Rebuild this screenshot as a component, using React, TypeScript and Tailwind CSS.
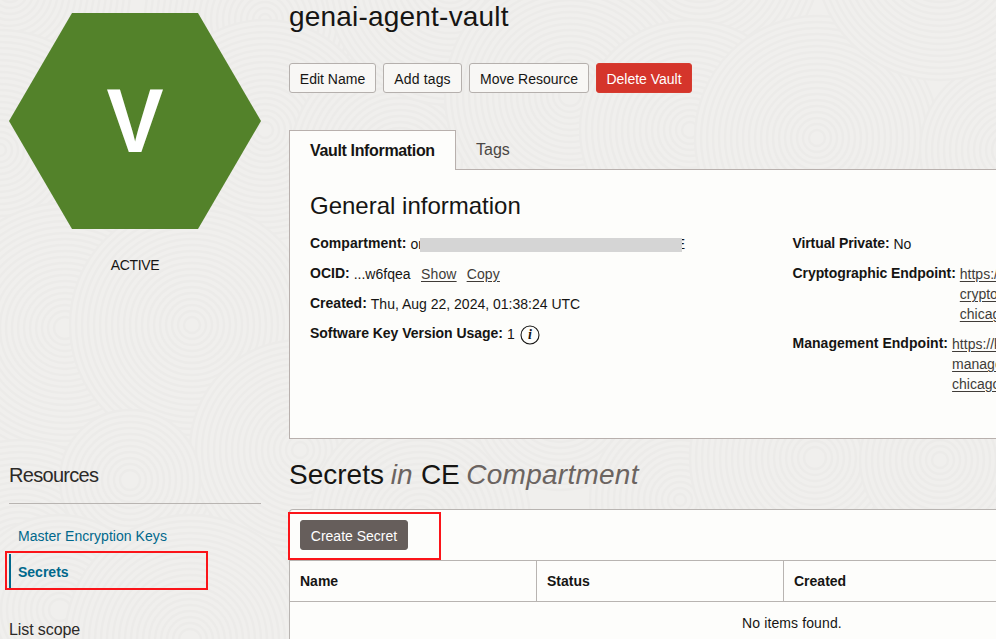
import type { ReactNode } from "react";

const DISCS: [number, number, number][] = [
  [10, -10, 120], [265, 20, 120], [265, 130, 110], [0, 150, 120],
  [130, 470, 110], [65, 328, 125], [192, 325, 122], [300, 450, 110],
  [20, 560, 120], [130, 480, 70], [60, 610, 95], [190, 640, 125],
  [400, 160, 110], [450, -20, 125], [700, -40, 120], [570, 95, 125], [690, 130, 110],
  [817, 138, 122], [1010, 150, 90], [940, -45, 125],
  [420, 520, 110], [560, 400, 90], [680, 500, 90], [815, 458, 125], [940, 460, 80],
];

function Texture() {
  return (
    <svg className="pointer-events-none absolute inset-0 -z-10" width="996" height="639" fill="none" aria-hidden="true">
      {DISCS.map(([x, y, r]) => (
        <g key={`${x}-${y}`}>
          <circle cx={x} cy={y} r={r} fill="#f0efed" />
          {Array.from({ length: Math.floor(r / 6) }, (_, i) => (
            <circle key={i} cx={x} cy={y} r={r - i * 6} stroke="#ecebe9" strokeWidth="2.4" />
          ))}
        </g>
      ))}
    </svg>
  );
}

function Button({ children, className }: { children: ReactNode; className: string }) {
  return (
    <button className={`h-[30px] shrink-0 rounded-[3px] border pt-px text-sm leading-[28px] ${className}`}>{children}</button>
  );
}

function Field({ label, children, labelClass = "" }: { label: string; children: ReactNode; labelClass?: string }) {
  return (
    <div className="mb-[10px] flex">
      <dt className={`mr-1 shrink-0 font-bold ${labelClass}`}>{label}</dt>
      <dd className="relative -mb-px flex pt-px">{children}</dd>
    </div>
  );
}

function Endpoint({ lines }: { lines: string[] }) {
  return (
    <a className="flex flex-col whitespace-nowrap text-[#403c38] underline underline-offset-2">
      {lines.map((line) => <span key={line}>{line}</span>)}
    </a>
  );
}

export default function App() {
  const outline = "border-[#b5b0ad] bg-[#f8f7f5]";
  return (
    <div className="relative isolate flex h-[639px] w-[996px] overflow-hidden bg-[#f0efed] font-['Liberation_Sans',Arial,sans-serif] text-sm leading-5 text-[#161513]">
      <Texture />
      <aside className="ml-[9px] w-[252px] shrink-0 pt-[13px]">
        <div className="flex h-[216px] items-center justify-center bg-[#53822a] text-[90px] font-bold text-white [clip-path:polygon(25%_0,75%_0,100%_50%,75%_100%,25%_100%,0_50%)]">
          <span className="scale-x-[0.95]">V</span>
        </div>
        <p className="mt-[26px] text-center tracking-[-0.35px]">ACTIVE</p>
        <h2 className="mt-[186px] border-b border-[#b8b4b1] pb-[14px] text-xl leading-7 tracking-[-0.7px] text-[#2c2a28]">Resources</h2>
        <nav className="relative mt-4 flex flex-col text-[#00688c]">
          <a className="h-[34px] pl-[9px] leading-8 tracking-[0.05px]">Master Encryption Keys</a>
          <a className="h-[35px] border-l-2 border-[#00688c] pl-[7px] leading-[36px] font-bold">Secrets</a>
          <div className="absolute top-[31px] -left-1 h-[39px] w-[203px] border-2 border-[#fb1419]" />
        </nav>
        <h3 className="mt-[29px] text-base leading-6 tracking-[-0.1px] text-[#2c2a28]">List scope</h3>
      </aside>
      <main className="ml-7 flex w-[800px] shrink-0 flex-col">
        <h1 className="text-[28px] leading-[34px] tracking-[0.2px]">genai-agent-vault</h1>
        <div className="mt-[29px] flex gap-[7px]">
          <Button className={`w-[87px] ${outline}`}>Edit Name</Button>
          <Button className={`w-[79px] tracking-[0.15px] ${outline}`}>Add tags</Button>
          <Button className={`w-[120px] ${outline}`}>Move Resource</Button>
          <Button className="w-24 border-[#d63b2f] bg-[#d5352b] text-white">Delete Vault</Button>
        </div>
        <div className="relative z-10 mt-[37px] -mb-px flex h-10 text-base">
          <div className="w-[167px] border border-b-0 border-[#b8b0ad] bg-[#fdfdfb] pl-5 leading-[40px] font-bold tracking-[-0.35px]">Vault Information</div>
          <div className="pl-5 leading-[39px] text-[#4b4744]">Tags</div>
        </div>
        <section className="h-[270px] border border-[#b8b0ad] bg-[#fdfdfb] pl-5">
          <h2 className="pt-5 text-2xl leading-8">General information</h2>
          <div className="mt-[11px] flex">
            <dl className="w-[482.5px] shrink-0">
              <Field label="Compartment:" labelClass="tracking-[0.06px]">
                or
                <span className="ml-[253px]">E</span>
                <span className="absolute top-[5px] left-[10px] h-[14px] w-[262px] bg-[#d5d5d5]" />
              </Field>
              <Field label="OCID:">
                ...w6fqea
                <a className="ml-[10.5px] tracking-[0.15px] text-[#403c38] underline underline-offset-2">Show</a>
                <a className="ml-[10px] tracking-[0.15px] text-[#403c38] underline underline-offset-2">Copy</a>
              </Field>
              <Field label="Created:">Thu, Aug 22, 2024, 01:38:24 UTC</Field>
              <Field label="Software Key Version Usage:" labelClass="tracking-[-0.03px]">
                1
                <svg className="mt-px -mb-px ml-[5px]" width="20" height="20" viewBox="0 0 20 20">
                  <circle cx="10" cy="10" r="9" fill="none" stroke="#161513" strokeWidth="1.1" />
                  <text x="10" y="14.3" textAnchor="middle" className="font-['Liberation_Serif',serif] text-sm font-bold italic" fill="#161513">i</text>
                </svg>
              </Field>
            </dl>
            <dl className="shrink-0">
              <Field label="Virtual Private:" labelClass="tracking-[-0.1px]">No</Field>
              <Field label="Cryptographic Endpoint:" labelClass="tracking-[-0.07px]"><Endpoint lines={["https://", "crypto", "chicago"]} /></Field>
              <Field label="Management Endpoint:" labelClass="tracking-[0.04px]"><Endpoint lines={["https://k", "manage", "chicago"]} /></Field>
            </dl>
          </div>
        </section>
        <h2 className="mt-[18px] text-[28px] leading-[36px]">
          Secrets <em className="-ml-px text-[#6b6461]">in</em><span className="ml-[8.5px] tracking-[-0.3px]">CE</span><em className="ml-[7px] tracking-[0.25px] text-[#6b6461]">Compartment</em>
        </h2>
        <section className="relative mt-4 flex flex-1 flex-col rounded-tl-[4px] border border-b-0 border-[#b8b4b1] bg-[#fdfdfb]">
          <div className="h-[50px] pt-[10px] pl-[10px]">
            <Button className="w-[108px] border-[#665f5c] bg-[#665e5b] text-white">Create Secret</Button>
          </div>
          <div className="absolute top-[2px] -left-[2px] h-[48px] w-[153px] border-2 border-[#fb1419]" />
          <div className="flex h-[42px] border-y border-[#b8b4b1] leading-10 font-bold">
            <div className="w-[247px] border-r border-[#b8b4b1] pl-[10px]">Name</div>
            <div className="w-[247px] border-r border-[#b8b4b1] pl-[10px]">Status</div>
            <div className="pl-[10px]">Created</div>
          </div>
          <p className="pt-[11px] pl-[452px] tracking-[0.12px]">No items found.</p>
        </section>
      </main>
    </div>
  );
}
